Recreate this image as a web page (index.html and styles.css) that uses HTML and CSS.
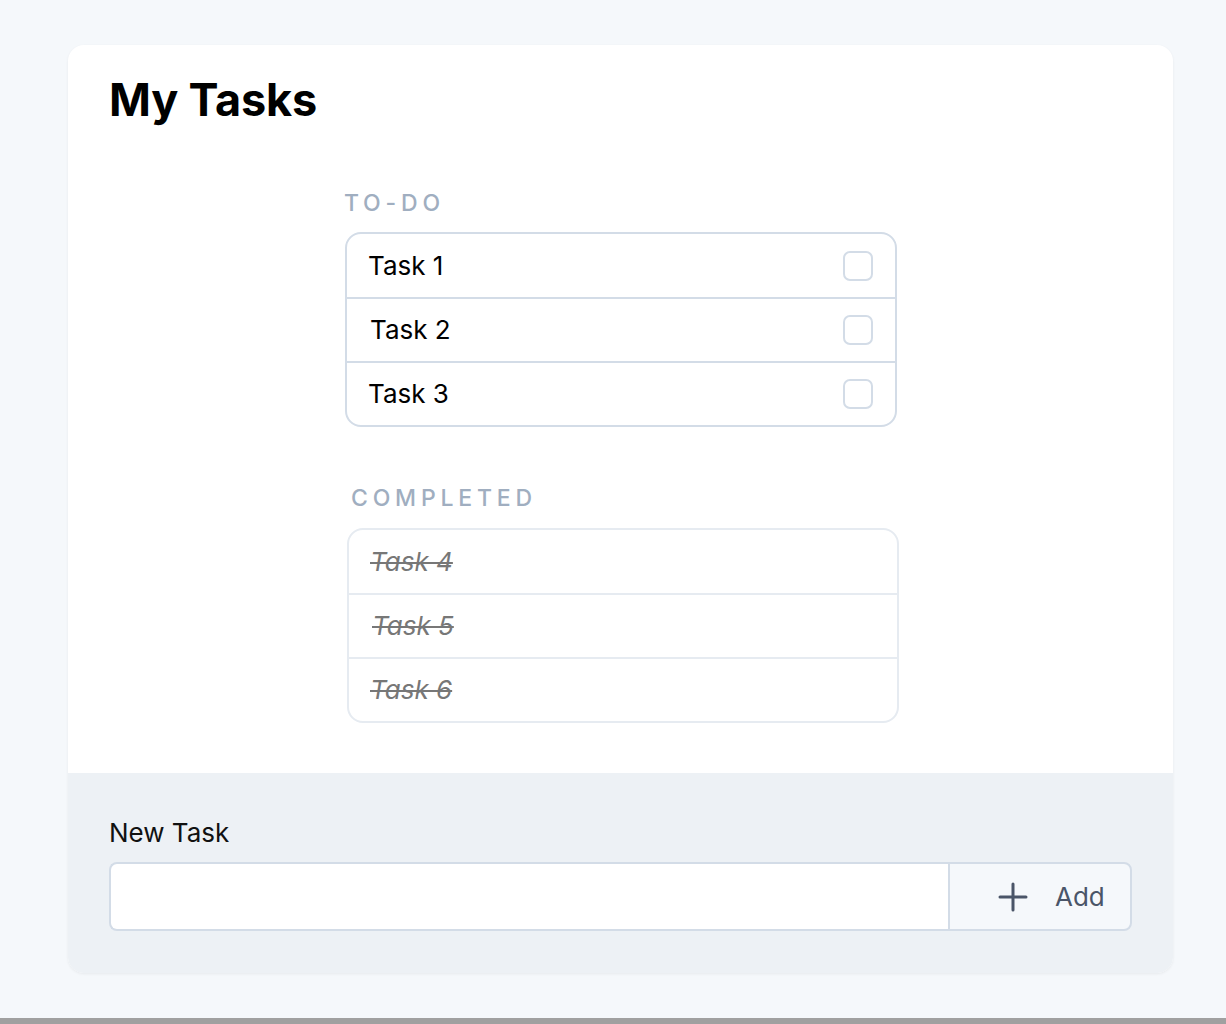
FILE: index.html
```html
<!DOCTYPE html>
<html lang="en">
<head>
<meta charset="utf-8">
<title>My Tasks</title>
<link rel="stylesheet" href="styles.css">
</head>
<body>
<div class="page">
  <main class="card">
    <section class="card-body">
      <h1 class="title">My Tasks</h1>
      <div class="lists">
        <div class="group">
          <h2 class="group-label">TO-DO</h2>
          <ul class="task-list">
            <li class="task"><span class="task-name">Task 1</span><span class="check"></span></li>
            <li class="task"><span class="task-name shift">Task 2</span><span class="check"></span></li>
            <li class="task"><span class="task-name">Task 3</span><span class="check"></span></li>
          </ul>
        </div>
        <div class="group group-done">
          <h2 class="group-label label-done">COMPLETED</h2>
          <ul class="task-list done-list">
            <li class="task"><span class="task-name done">Task 4</span></li>
            <li class="task"><span class="task-name done shift">Task 5</span></li>
            <li class="task"><span class="task-name done">Task 6</span></li>
          </ul>
        </div>
      </div>
    </section>
    <footer class="card-footer">
      <label class="new-label" for="new-task">New Task</label>
      <div class="input-row">
        <input id="new-task" class="new-input" type="text">
        <button class="add-btn" type="button">
          <svg class="plus" width="30" height="30" viewBox="0 0 30 30" aria-hidden="true">
            <path d="M15 2v26M2 15h26" stroke="#4a5568" stroke-width="3" stroke-linecap="round" fill="none"/>
          </svg>
          <span>Add</span>
        </button>
      </div>
    </footer>
  </main>
</div>
<div class="bottom-bar"></div>
</body>
</html>
```
FILE: styles.css
```css
* { box-sizing: border-box; }
html, body { margin: 0; padding: 0; }
body {
  background: #f5f8fb;
  font-family: "Inter", "Liberation Sans", sans-serif;
  color: #000;
}
.page {
  padding: 45px 53px 45px 68px;
}
.card {
  width: 1105px;
  background: #fff;
  border-radius: 16px;
  box-shadow: 0 1px 3px rgba(0, 0, 0, 0.06);
  overflow: hidden;
}
.card-body {
  padding: 26px 40px 50px 41px;
}
.title {
  margin: 0;
  font-size: 45px;
  font-weight: 700;
  line-height: 58px;
  letter-spacing: -0.2px;
}
.lists {
  display: flex;
  flex-direction: column;
  align-items: center;
  margin-top: 59px;
  gap: 56px;
}
.group {
  width: 552px;
}
.group-done {
  margin-left: 4px;
}
.group-label {
  margin: 0 0 14px -1px;
  font-size: 23px;
  font-weight: 500;
  letter-spacing: 4.8px;
  line-height: 30px;
  color: #a0aec0;
}
.label-done {
  margin-left: 4px;
  margin-bottom: 15px;
}
.task-list {
  list-style: none;
  margin: 0;
  padding: 0;
  border: 2px solid #d3dce7;
  border-radius: 16px;
}
.done-list {
  border-color: #e6ebf1;
}
.task {
  display: flex;
  align-items: center;
  justify-content: space-between;
  height: 63px;
  padding: 0 22px 0 21px;
}
.task + .task {
  border-top: 2px solid #d3dce7;
  height: 64px;
}
.done-list .task + .task {
  border-top-color: #e6ebf1;
}
.task-name {
  font-size: 26px;
  line-height: 30px;
}
.task-name.shift {
  margin-left: 2px;
}
.task-name.done {
  font-style: italic;
  color: #777;
  text-decoration: line-through;
  text-decoration-thickness: 2px;
}
.check {
  width: 30px;
  height: 30px;
  border: 2px solid #d3dce7;
  border-radius: 7px;
}
.card-footer {
  background: #edf1f5;
  height: 200px;
  padding: 45px 41px 0 41px;
}
.new-label {
  display: block;
  font-size: 26px;
  line-height: 30px;
  color: #111;
  margin-bottom: 14px;
}
.input-row {
  display: flex;
  width: 1023px;
  height: 69px;
}
.new-input {
  flex: 1;
  height: 100%;
  border: 2px solid #d3dce7;
  border-right: none;
  border-radius: 8px 0 0 8px;
  background: #fff;
  outline: none;
  font: inherit;
}
.add-btn {
  width: 184px;
  height: 100%;
  display: flex;
  align-items: center;
  justify-content: flex-start;
  gap: 27px;
  padding: 0 0 0 48px;
  border: 2px solid #d3dce7;
  border-radius: 0 8px 8px 0;
  background: #f5f8fb;
  font-family: "Inter", "Liberation Sans", sans-serif;
  font-size: 26px;
  color: #4a5568;
}
.plus { display: block; }
.bottom-bar {
  height: 6px;
  background: #a0a0a0;
}
```
